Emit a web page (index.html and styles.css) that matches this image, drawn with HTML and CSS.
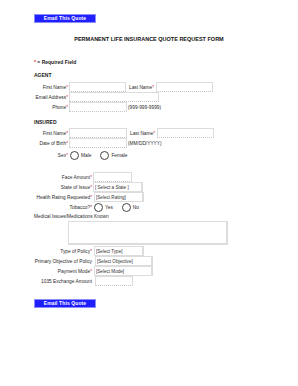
FILE: index.html
```html
<!DOCTYPE html>
<html lang="en">
<head>
    <meta charset="UTF-8">
    <meta name="viewport" content="width=device-width, initial-scale=1.0">
    <link rel="stylesheet" href="styles.css">
</head>
<body>
    <div class="page">
        <button type="button" class="email-btn">Email This Quote</button>

        <h1 class="title">PERMANENT LIFE INSURANCE QUOTE REQUEST FORM</h1>

        <p class="required-note"><span class="req">*</span> = Required Field</p>

        <form class="quote-form">
            <h2 class="section-head">AGENT</h2>
            <div class="row">
                <label class="lbl">First Name<span class="req">*</span></label>
                <input type="text" class="field w57">
                <label class="lbl-inline">Last Name<span class="req">*</span></label>
                <input type="text" class="field w57">
            </div>
            <div class="row">
                <label class="lbl">Email Address<span class="req">*</span></label>
                <input type="text" class="field w90">
            </div>
            <div class="row">
                <label class="lbl">Phone<span class="req">*</span></label>
                <input type="text" class="field w58">
                <span class="hint">(999-999-9999)</span>
            </div>

            <h2 class="section-head insured">INSURED</h2>
            <div class="row">
                <label class="lbl">First Name<span class="req">*</span></label>
                <input type="text" class="field w58">
                <label class="lbl-inline">Last Name<span class="req">*</span></label>
                <input type="text" class="field w57">
            </div>
            <div class="row">
                <label class="lbl">Date of Birth<span class="req">*</span></label>
                <input type="text" class="field w58">
                <span class="hint">(MM/DD/YYYY)</span>
            </div>
            <div class="row sex-row">
                <label class="lbl">Sex<span class="req">*</span></label>
                <label class="radio-option"><input type="radio" name="sex"><span class="radio-custom"></span>Male</label>
                <label class="radio-option"><input type="radio" name="sex"><span class="radio-custom"></span>Female</label>
            </div>

            <div class="policy">
                <div class="row">
                    <label class="lbl wide">Face Amount<span class="req">*</span></label>
                    <input type="text" class="field w39">
                </div>
                <div class="row">
                    <label class="lbl wide">State of Issue<span class="req">*</span></label>
                    <select class="field w50"><option>[ Select a State ]</option></select>
                </div>
                <div class="row">
                    <label class="lbl wide">Health Rating Requested<span class="req">*</span></label>
                    <select class="field w50 nudge"><option>[Select Rating]</option></select>
                </div>
                <div class="row">
                    <label class="lbl wide">Tobacco?<span class="req">*</span></label>
                    <label class="radio-option"><input type="radio" name="tobacco"><span class="radio-custom"></span>Yes</label>
                    <label class="radio-option"><input type="radio" name="tobacco"><span class="radio-custom"></span>No</label>
                </div>
                <p class="medical">Medical Issues/Medications Known</p>
                <textarea class="notes"></textarea>
                <div class="row">
                    <label class="lbl wide">Type of Policy<span class="req">*</span></label>
                    <select class="field w50 nudge"><option>[Select Type]</option></select>
                </div>
                <div class="row">
                    <label class="lbl wide">Primary Objective of Policy</label>
                    <select class="field w58 nudge2"><option>[Select Objective]</option></select>
                </div>
                <div class="row">
                    <label class="lbl wide">Payment Mode<span class="req">*</span></label>
                    <select class="field w59 nudge"><option>[Select Mode]</option></select>
                </div>
                <div class="row">
                    <label class="lbl wide">1035 Exchange Amount</label>
                    <input type="text" class="field w38 nudge2">
                </div>
            </div>
        </form>

        <button type="button" class="email-btn bottom">Email This Quote</button>
    </div>
</body>
</html>
```

FILE: styles.css
```css
body {
    margin: 0;
    background: #fff;
    font-family: 'Liberation Sans', Arial, sans-serif;
    color: #333;
}

.page {
    padding: 14px 0 0 34px;
}

.email-btn {
    display: block;
    width: 62px;
    height: 9px;
    padding: 0;
    background-color: #2020ff;
    border: 1px solid #8c8cff;
    color: #fff;
    font-family: 'Liberation Sans', Arial, sans-serif;
    font-size: 5px;
    font-weight: bold;
    line-height: 7px;
    letter-spacing: 0.1px;
}

.email-btn.bottom {
    margin-top: 13px;
}

.title {
    margin: 13px 0 0 -34px;
    font-size: 5.5px;
    line-height: 7px;
    font-weight: bold;
    color: #111;
    text-align: center;
}

.required-note {
    margin: 15px 0 0;
    font-size: 5px;
    line-height: 8px;
    font-weight: bold;
    color: #222;
}

.req {
    color: #e8262a;
}

.quote-form {
    margin: 0;
}

.section-head {
    margin: 5px 0 3px;
    font-size: 5px;
    line-height: 8px;
    font-weight: bold;
    color: #222;
}

.section-head.insured {
    margin: 6px 0 2px;
}

.row {
    display: flex;
    align-items: center;
    height: 10px;
    font-size: 4.8px;
    color: #2a2a2a;
}

.lbl {
    width: 34px;
    margin-right: 1px;
    text-align: right;
    white-space: nowrap;
}

.lbl.wide {
    width: 58px;
}

.lbl-inline {
    margin: 0 2px 0 3px;
    white-space: nowrap;
}

.hint {
    margin-left: 1px;
    white-space: nowrap;
}

.field {
    box-sizing: border-box;
    height: 10px;
    margin: 0;
    padding: 0 1px;
    border: 1px solid #dcdcdc;
    border-bottom: 1px dotted #c4c4c4;
    background: #fff;
    font-family: 'Liberation Sans', Arial, sans-serif;
    font-size: 4.6px;
    color: #333;
    border-radius: 0;
    outline: none;
}

select.field {
    -webkit-appearance: none;
    appearance: none;
    border-bottom: 1px solid #dcdcdc;
    border-right: 2px solid #dcdcdc;
}

.nudge {
    margin-left: 1px;
}

.nudge2 {
    margin-left: 2px;
}

.w38 { width: 38px; }
.w39 { width: 39px; }
.w50 { width: 50px; }
.w57 { width: 57px; }
.w58 { width: 58px; }
.w59 { width: 59px; }
.w90 { width: 90px; }

.sex-row {
    margin-top: 2px;
}

.policy {
    margin-top: 12px;
}

.radio-option {
    display: flex;
    align-items: center;
    margin-left: 1px;
    margin-right: 8px;
    white-space: nowrap;
}

.radio-option input[type="radio"] {
    display: none;
}

.radio-option .radio-custom {
    box-sizing: border-box;
    width: 9px;
    height: 9px;
    margin-right: 2px;
    border: 1px solid #444;
    border-radius: 50%;
    background: #fff;
}

.medical {
    margin: 1px 0 0;
    font-size: 4.8px;
    line-height: 8px;
    color: #2a2a2a;
}

.notes {
    display: block;
    box-sizing: border-box;
    width: 160px;
    height: 24px;
    margin: 0 0 1px 34px;
    padding: 0;
    border: 1px solid #dcdcdc;
    border-right: 2px solid #dcdcdc;
    border-bottom: 2px solid #dcdcdc;
    resize: none;
    outline: none;
}
```
